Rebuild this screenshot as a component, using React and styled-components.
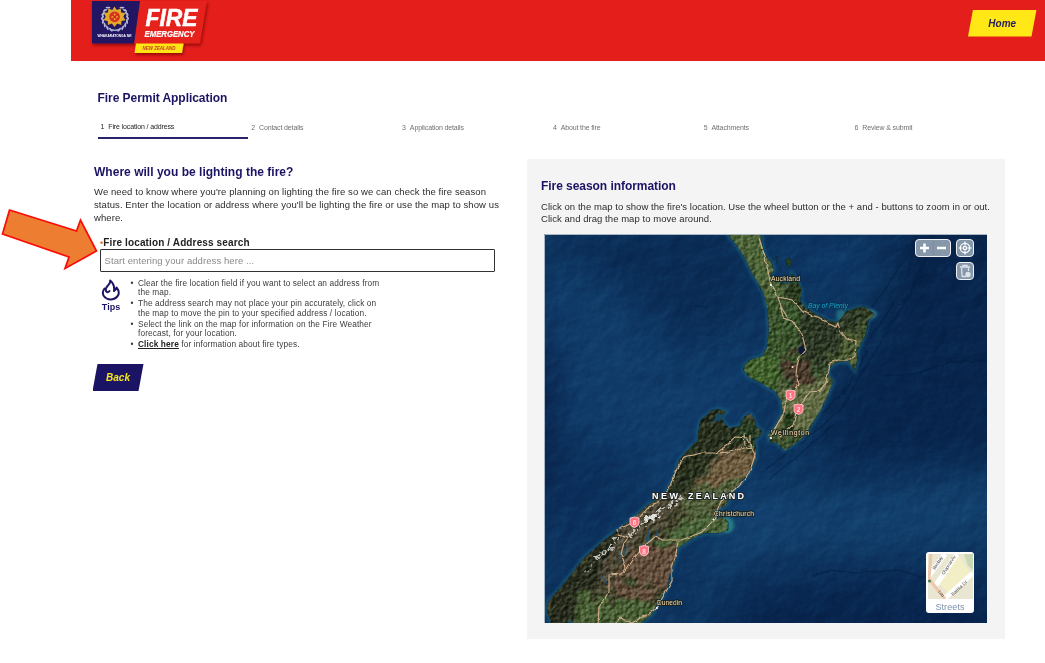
import React from "react";
import styled, { createGlobalStyle, css } from "styled-components";

const Global = createGlobalStyle`
  * { box-sizing: border-box; }
  body { margin: 0; background: #fff; font-family: "Liberation Sans", Arial, sans-serif; color: #333; overflow: hidden; }
  h1, h2, p, ul, ol { margin: 0; padding: 0; }
`;

const navy = "#1b1464";

const Page = styled.div`
  position: relative;
  width: 1045px;
  height: 663px;
  background: #fff;
`;

const Header = styled.header`
  display: flex;
  justify-content: space-between;
  align-items: flex-start;
  height: 61px;
  margin-left: 71px;
  padding: 0 8.5px 0 17px;
  background: #e31e1b;
`;

const SlantButton = styled.button`
  display: flex;
  align-items: center;
  justify-content: center;
  border: 0;
  padding: 0;
  font: italic bold 10px "Liberation Sans", Arial, sans-serif;
  width: ${(p) => p.$width}px;
  height: ${(p) => p.$height}px;
  margin: ${(p) => p.$margin};
  color: ${(p) => p.$color};
  background: ${(p) => p.$bg};
  clip-path: polygon(5px 0, 100% 0, calc(100% - 5px) 100%, 0 100%);
`;

const Intro = styled.section`
  padding: 30px 0 0 97.5px;
`;

const Title = styled.h1`
  font-size: 12px;
  line-height: 14px;
  letter-spacing: -0.05px;
  color: ${navy};
`;

const Steps = styled.ol`
  display: flex;
  list-style: none;
  margin-top: 15px;
`;

const Step = styled.li`
  display: flex;
  gap: 4px;
  width: 150.8px;
  height: 19px;
  padding: ${(p) => (p.$active ? "3px 0 0 3px" : "4px 0 0 3px")};
  font-size: 7px;
  line-height: 8px;
  letter-spacing: -0.13px;
  color: #707070;
  white-space: nowrap;
  ${(p) => p.$active && css`
    color: #222;
    border-bottom: 2px solid #29236c;
  `}
`;

const Columns = styled.main`
  display: flex;
  justify-content: space-between;
  align-items: flex-start;
  padding: 20px 40px 0 94px;
`;

const FormColumn = styled.section`
  width: 410px;
  padding-top: 6px;
`;

const Heading = styled.h2`
  font-size: 12px;
  line-height: 14px;
  letter-spacing: ${(p) => p.$spacing || "-0.05px"};
  color: ${navy};
`;

const Copy = styled.p`
  margin-top: ${(p) => p.$top}px;
  font-size: 9.5px;
  line-height: ${(p) => p.$line}px;
  letter-spacing: ${(p) => p.$spacing}px;
  color: #2c2c2c;
  white-space: nowrap;
`;

const Field = styled.label`
  display: block;
  margin: 12px 0 0 6px;
  font-size: 10px;
  font-weight: bold;
  line-height: 12px;
  letter-spacing: 0.13px;
  color: #222;
`;

const Required = styled.span`
  color: #e8731c;
  font-size: 9px;
`;

const Input = styled.input`
  display: block;
  width: 394.5px;
  height: 23.5px;
  padding: 0 3.5px;
  border: 1px solid #333;
  border-radius: 1px;
  outline: 0;
  font: 9.5px "Liberation Sans", Arial, sans-serif;
  letter-spacing: 0.08px;
  &::placeholder { color: #8a8a8a; opacity: 1; }
`;

const Tips = styled.div`
  display: flex;
  margin: 7px 0 0 7px;
`;

const TipsMark = styled.div`
  width: 20px;
  display: flex;
  flex-direction: column;
  align-items: center;
  font-size: 9px;
  font-weight: bold;
  line-height: 10px;
  color: ${navy};
`;

const TipList = styled.ul`
  list-style: none;
  margin-left: 9.5px;
  font-size: 8.3px;
  line-height: 9.2px;
  letter-spacing: 0.12px;
  color: #3c3c3c;
  white-space: nowrap;
`;

const Tip = styled.li`
  display: flex;
  margin-bottom: 1.9px;
  &::before { content: "•"; width: 7.5px; }
`;

const Link = styled.a`
  color: #222;
  font-weight: bold;
  text-decoration: underline;
`;

const MapPanel = styled.section`
  width: 478px;
  height: 480px;
  padding: 20px 0 0 14px;
  background: #f4f4f4;
`;

const MapFrame = styled.div`
  position: relative;
  width: 443px;
  height: 389px;
  margin: 9px 0 0 3px;
  overflow: hidden;
`;

const MapDrawing = styled.svg`
  display: block;
`;

const Controls = styled.div`
  position: absolute;
  top: 4.5px;
  right: 13px;
  display: grid;
  grid-template-columns: 36.5px 18.5px;
  gap: 5.5px 4.5px;
  justify-items: end;
`;

const Control = styled.button`
  display: flex;
  align-items: center;
  justify-content: space-around;
  width: ${(p) => p.$width || 18.5}px;
  height: 18px;
  padding: 0 1px;
  border: 1.5px solid #eef0f2;
  border-radius: 4px;
  background: #8697aa;
  grid-column: ${(p) => p.$column};
`;

const Basemap = styled.button`
  position: absolute;
  right: 13px;
  bottom: 10px;
  display: flex;
  flex-direction: column;
  align-items: center;
  width: 48px;
  height: 61px;
  padding: 2px 1.5px;
  border: 0;
  border-radius: 3px;
  background: #fff;
  font: 9px/16px "Liberation Sans", Arial, sans-serif;
  letter-spacing: 0.1px;
  color: #7e93a8;
  svg { display: block; flex: none; }
`;

const Pointer = styled.svg`
  position: absolute;
  left: 0;
  top: 204.5px;
`;

const steps = ["Fire location / address", "Contact details", "Application details", "About the fire", "Attachments", "Review & submit"];

const leaves = Array.from({ length: 8 }, (_, i) => 20 + i * 18);

function Logo() {
  return (
    <svg width="130" height="60" viewBox="88 0 130 60">
      <defs>
        <filter id="shade" x="-10%" y="-10%" width="125%" height="135%">
          <feDropShadow dx="1" dy="2" stdDeviation="1.5" floodColor="#700" floodOpacity="0.7" />
        </filter>
      </defs>
      <g filter="url(#shade)">
        <path d="M139 1H207L200 43.5H183.6L182 53H134.5L136 43.5H134z" fill="#e5201d" />
        <path d="M92 1H140L134 43.5H92z" fill="#211762" />
        <path d="M136 43.5H183.6L182 53H134.5z" fill="#ffe414" />
      </g>
      {leaves.map((a) => (
        <g key={a} fill="#b4b9d8">
          <ellipse cx="115" cy="30.5" rx=".9" ry="2.5" transform={`rotate(${a} 115 18) rotate(-60 115 30.5)`} />
          <ellipse cx="115" cy="30.5" rx=".9" ry="2.5" transform={`rotate(${-a} 115 18) rotate(60 115 30.5)`} />
        </g>
      ))}
      <path d="M105 9Q99 19 106 26 110 30.500 119 30.500M125 9Q131 19 124 26 120 30.500 111 30.500" stroke="#b4b9d8" strokeWidth=".9" fill="none" />
      <path d="M114.500 6.500l2.300 3.500 4-1.600.3 4.200 4.200.4-1.900 3.700 2.100 3.500-4.100.8-.2 4.100-4-1.500-2.700 3.300-2.600-3.300-4 1.500-.2-4.100-4.100-.8 2.100-3.500-1.900-3.700 4.200-.4.3-4.200 4 1.600z" fill="#e0a92c" />
      <circle cx="114.6" cy="16.8" r="5.4" fill="#d8331f" />
      <path d="M111.500 16.800h6.300M114.700 13.500v6.600" stroke="#f2c230" strokeWidth="1.2" />
      <circle cx="114.7" cy="16.8" r="1.4" fill="#c62020" />
      <g fontFamily="Liberation Sans, Arial, sans-serif" fontWeight="bold">
        <text x="97.5" y="36.5" fontSize="3.3" fill="#fff" textLength="34" lengthAdjust="spacingAndGlyphs">WHAKARATONGA IWI</text>
        <g fontStyle="italic" fill="#fff">
          <text x="145.5" y="26.3" fontSize="23.5" textLength="52" lengthAdjust="spacingAndGlyphs" stroke="#fff" strokeWidth=".5">FIRE</text>
          <text x="144.5" y="37" fontSize="8.8" textLength="50" lengthAdjust="spacingAndGlyphs" stroke="#fff" strokeWidth=".2">EMERGENCY</text>
          <text x="142.5" y="49.8" fontSize="4.6" fill="#c5392b" textLength="33" lengthAdjust="spacingAndGlyphs">NEW ZEALAND</text>
        </g>
      </g>
    </svg>
  );
}

const north = "M727 233L736 244 744 256 751 271 759 284 764 293 768 311 769 330 767 348 763 356 751 360 745 365 744 370 749 377 758 381 766 386 775 391 781 400 783 412 775 427 768 435 770 441 777 443 785 450 793 445 802 438 808 430 814 420 820 411 824 402 828 394 833 381 827 373 829 368 837 362 848 361 855 370 857 361 857 352 865 334 868 321 875 314 868 309 860 307 847 311 838 322 828 321 815 314 805 307 800 301 801 290 797 281 792 274 790 284 783 283 772 281 770 275 774 270 770 261 765 256 762 245 760 233z";
const south = "M698 441L699 427 701 420 711 412 719 409 726 412 721 416 724 423 729 428 740 426 744 417 751 414 755 421 756 427 762 431 760 436 754 439 756 449 756 458 750 470 744 478 732 491 726 505 716 511 717 519 723 517 728 522 728 530 719 533 704 533 691 539 678 548 675 559 672 568 667 588 657 604 651 615 638 625H576L571 620 564 625H552L547 610 549 601 561 588 574 571 584 558 601 543 617 531 631 520 647 506 664 495 674 478 679 461 687 451z";

const roads = [
  "M759 238L765 257 771 285 778 297 781 307 783 318 792 321 802 334 806 350 799 358 797 366 796 376 799 384 795 390 789 396 785 406 784 413 775 428 771 436",
  "M778 297L792 300 797 305 803 312 817 317 829 324 836 327 838 323 840 331 847 339 856 341 855 356 850 360 838 360 830 363 829 370 826 382 820 391 810 392 802 402 797 410 793 426 780 437",
  "M781 307L788 318",
  "M571 650L560 623M598 625L599 607 605 599 609 592 609 575 621 574 626 567 623 559 621 554 624 543 628 538 619 535 618 529 628 525 638 519 648 508 656 504 665 495 673 480 678 466 684 457 702 453 716 453 726 446 736 437 747 438 755 455 750 471 744 480 735 489 721 501 714 520 701 533 681 540 663 540 655 537 644 546 636 556 628 567 624 573",
  "M716 453L730 452 744 448 754 447M744 434L745 446M750 436V446",
  "M678 541L676 554 672 567 672 581 664 595 656 609 645 616 632 623 620 618 615 624",
];

const cities = [
  ["Auckland", 771, 281, 771, 285, 29],
  ["Wellington", 771, 434.5, 771, 438, 38],
  ["Christchurch", 714, 516, 713.5, 519.5, 40],
  ["Dunedin", 657, 604.5, 657, 608, 25],
];

const seaArea = { filterUnits: "userSpaceOnUse", x: 440, y: 130, width: 660, height: 600 };

function Shield({ x, y, n }) {
  return (
    <g transform={`translate(${x} ${y})`}>
      <path d="M-4.500-4.500L0-5.500 4.500-4.500V1Q4 4 0 5-4 4-4.500 1z" fill="#ff7484" stroke="#ffd9d8" strokeWidth=".8" />
      <text y="2.5" textAnchor="middle" fontSize="6.5" fontWeight="bold" fill="#ffdede">{n}</text>
    </g>
  );
}

function NewZealandMap() {
  return (
    <MapDrawing width="443" height="389" viewBox="544 234 443 389" fontFamily="Liberation Sans, Arial, sans-serif">
      <defs>
        <filter id="b20" {...seaArea} colorInterpolationFilters="sRGB"><feGaussianBlur stdDeviation="17" /></filter>
        <filter id="b2" {...seaArea}><feGaussianBlur stdDeviation="1.6" /></filter>
        <filter id="rough" {...seaArea}><feTurbulence type="fractalNoise" baseFrequency=".13" numOctaves="3" seed="4" /><feDisplacementMap in="SourceGraphic" scale="3.5" xChannelSelector="R" yChannelSelector="G" /></filter>
        <filter id="snow" {...seaArea}><feTurbulence type="fractalNoise" baseFrequency=".25" numOctaves="3" seed="7" /><feDisplacementMap in="SourceGraphic" scale="12" xChannelSelector="R" yChannelSelector="G" /><feGaussianBlur stdDeviation=".6" /></filter>
        <filter id="patchy" {...seaArea}><feTurbulence type="fractalNoise" baseFrequency=".09" numOctaves="5" seed="9" /><feDisplacementMap in="SourceGraphic" scale="26" xChannelSelector="R" yChannelSelector="G" /><feGaussianBlur stdDeviation="1.2" /></filter>
        <filter id="sea" x="0" y="0" width="100%" height="100%" colorInterpolationFilters="sRGB"><feTurbulence type="fractalNoise" baseFrequency=".05" numOctaves="4" seed="12" /><feDiffuseLighting surfaceScale="1.6" lightingColor="#fff"><feDistantLight azimuth="225" elevation="30" /></feDiffuseLighting></filter>
        <filter id="terrain" x="0" y="0" width="100%" height="100%" colorInterpolationFilters="sRGB"><feTurbulence type="fractalNoise" baseFrequency=".24" numOctaves="4" seed="31" /><feDiffuseLighting surfaceScale="1.8" lightingColor="#fff"><feDistantLight azimuth="225" elevation="32" /></feDiffuseLighting></filter>
        <clipPath id="land"><path d={north} /><path d={south} /></clipPath>
      </defs>
      <rect x="544" y="234" width="443" height="389" fill="#0d345f" />
      <g filter="url(#b20)">
        <path d="M550 225L740 225 752 300 700 345 640 305 580 255z" fill="#0a2c55" />
        <path d="M544 260L610 280 690 370 760 330 745 420 660 500 560 420z" fill="#103b69" />
        <path d="M524 320L555 370 548 500 524 500z" fill="#081f48" />
        <path d="M550 470L640 440 620 500 560 560z" fill="#0b2f5b" />
        <path d="M890 205H1020V460H880L820 470 850 410 900 330z" fill="#08254d" />
        <path d="M780 235H880L860 290 810 290z" fill="#0e3765" />
        <path d="M740 488L860 498 1020 480V530L880 545 790 545 690 575z" fill="#13416f" />
        <path d="M740 590L880 575 1020 590V660H720z" fill="#08254e" />
        <path d="M820 430L850 390 880 330 900 300 930 250" stroke="#071c3e" strokeWidth="12" fill="none" />
      </g>
      <rect x="544" y="234" width="443" height="389" filter="url(#sea)" opacity=".34" style={{ mixBlendMode: "soft-light" }} />
      <g fill="none" stroke="#061a3a" strokeWidth="1.5" opacity=".45" filter="url(#rough)">
        <path d="M765 470L790 450 820 428 845 405 858 380 879 345 890 325 907 300 930 250M768 480L806 449 836 422M812 577L830 570 855 573 900 570 925 578M882 376L915 374 950 362 985 360M820 415L850 385M870 340L895 301M694 306L708 307M860 320L885 290 900 265M843 395L868 350" />
      </g>
      <path d="M700 355L718 340 735 332 748 324" fill="none" stroke="#2b6690" strokeWidth="1.5" opacity=".3" filter="url(#b2)" />
      <g fill="none" stroke="#1f6881" strokeWidth="4.5" opacity=".6" filter="url(#b2)"><path d={north} /><path d={south} /></g>
      <ellipse cx="790" cy="288" rx="11" ry="7" fill="#1d5668" filter="url(#b2)" />
      <ellipse cx="871" cy="314" rx="5" ry="4" fill="#2a7c90" filter="url(#b2)" />
      <ellipse cx="841" cy="315" rx="5" ry="6" fill="#226a80" filter="url(#b2)" />
      <ellipse cx="727" cy="525" rx="7" ry="8" fill="#287b82" filter="url(#b2)" />
      <g filter="url(#rough)" stroke="#0a2a3c" strokeWidth=".8"><path d={north} fill="#364d2b" /><path d={south} fill="#3c4026" /><path d="M786 259l3-2 2 6-2 4-3-4zM776 256l3 4-2 3z" fill="#26401f" /></g>
      <g clipPath="url(#land)">
        <path d={north} fill="#374d2b" />
        <path d={south} fill="#3d3f28" />
        <g filter="url(#patchy)">
          <path d="M720 225L760 225 778 270 781 300 764 295 742 255z" fill="#4c6236" />
          <path d="M765 295L800 312 805 350 780 380 755 358 768 340z" fill="#38532c" />
          <path d="M785 270L803 280 805 305 790 300z" fill="#26391f" />
          <path d="M800 303L840 325 850 305 875 308 860 345 828 367 810 365 798 345z" fill="#2b3520" />
          <path d="M840 335L868 320 857 365 830 362z" fill="#45552f" />
          <path d="M738 358L768 354 785 378 769 390 742 380z" fill="#40612c" />
          <path d="M779 358L805 355 815 375 806 390 790 387z" fill="#46392a" />
          <path d="M780 392L830 374 832 394 815 424 794 445 774 435z" fill="#616b42" />
          <path d="M790 408L799 406 787 438 772 440z" fill="#1f3019" />
          <path d="M690 400L732 405 742 445 712 458 688 490 655 502 670 470z" fill="#282f1c" />
          <path d="M738 412L765 425 756 447 735 443z" fill="#263b20" />
          <path d="M718 455L762 446 754 474 720 492 692 495z" fill="#6c5a3d" />
          <path d="M690 492L745 474 730 502 714 514 682 522z" fill="#505b38" />
          <path d="M700 515L732 514 727 537 690 541 672 556 650 542z" fill="#476035" />
          <path d="M664 496L684 496 665 524 630 548 605 590 580 588 604 545z" fill="#4d4636" />
          <path d="M630 516L605 536 560 584 540 603 550 625 583 626 598 575z" fill="#282b1f" />
          <path d="M630 550L678 546 670 592 640 602 610 592z" fill="#5f4c37" />
          <path d="M580 592L605 600 640 600 662 604 640 632 570 630z" fill="#475d33" />
          <path d="M620 580l10 8 8-4-8-8zM780 330l6 10 6-4zM700 470l10-4 3 8zM640 585l12-4 2 8z" fill="#3a4529" />
        </g>
        <rect x="544" y="234" width="443" height="389" filter="url(#terrain)" opacity=".75" style={{ mixBlendMode: "soft-light" }} />
        <g fill="none" stroke="#dedfdb" filter="url(#snow)">
          <path d="M683 496L668 507M664 508L650 517 642 523" strokeWidth="3" strokeDasharray="7 3" opacity=".8" />
          <path d="M658 515L646 519" strokeWidth="5" />
          <path d="M640 528L628 537M617 540L607 552 595 558" strokeWidth="2.6" strokeDasharray="4 3 7 2" opacity=".8" />
          <path d="M603 551L586 573" strokeWidth="1.4" strokeDasharray="3 5" opacity=".6" />
        </g>
      </g>
      <path d="M799 348l4-2 1 3 2 1-4 4-3-1z" fill="#0a1838" stroke="#111f38" />
      <path d="M647 541l1-10 1 2v8zM656 536l2-7M640 550l1-5M619 562l2-11M601 575l6 9M623 556l4-10" stroke="#20506b" strokeWidth="1.3" fill="#2d6989" />
      <path d="M711 423l7-10 6 3 2 6-6-3z" fill="#164764" filter="url(#rough)" />
      <g filter="url(#rough)" fill="none" stroke="#cfae8b" strokeWidth="1.1">
        {roads.map((d) => <path key={d} d={d} />)}
      </g>
      <circle cx="792.5" cy="367" r="1" fill="#ffe7c4" />
      <Shield x={790.5} y={395.5} n="1" />
      <Shield x={798.5} y={409.5} n="2" />
      <Shield x={634.5} y={522.5} n="6" />
      <Shield x={644} y={551} n="8" />
      <g stroke="#171e18" strokeWidth="1.5" paintOrder="stroke" fontSize="6.8" fill="#ffe2b3">
        {cities.map(([name, x, y, cx, cy, length]) => (
          <g key={name}>
            <text x={x} y={y} textLength={length}>{name}</text>
            <circle cx={cx} cy={cy} r="1.1" fill="#fff" strokeWidth=".3" />
          </g>
        ))}
      </g>
      <text x="808" y="307.5" fontSize="6.8" fontStyle="italic" fill="#16a5d0" stroke="#06364e" strokeWidth="1" paintOrder="stroke" textLength="40">Bay of Plenty</text>
      <g fontSize="9" fontWeight="bold" fill="#fff" stroke="#222b2a" strokeWidth="2" paintOrder="stroke">
        <text x="652" y="498.5" textLength="26">NEW</text>
        <text x="688" y="498.5" textLength="56">ZEALAND</text>
      </g>
      <path d="M544.500 623V234.500H987" fill="none" stroke="#a8b7c4" />
    </MapDrawing>
  );
}

export default function App() {
  return (
    <Page>
      <Global />
      <Header>
        <Logo />
        <SlantButton $width={68.5} $height={27} $margin="9.5px 0 0" $bg="#ffe816" $color="#29205a">Home</SlantButton>
      </Header>
      <Intro>
        <Title>Fire Permit Application</Title>
        <Steps>
          {steps.map((name, i) => (
            <Step key={name} $active={i === 0}><span>{i + 1}</span><span>{name}</span></Step>
          ))}
        </Steps>
      </Intro>
      <Columns>
        <FormColumn>
          <Heading $spacing="0.02px">Where will you be lighting the fire?</Heading>
          <Copy $top={6} $line={13.2} $spacing={0.09}>
            We need to know where you're planning on lighting the fire so we can check the fire season<br />
            status. Enter the location or address where you'll be lighting the fire or use the map to show us<br />
            where.
          </Copy>
          <Field>
            <Required>•</Required>Fire location / Address search
            <Input placeholder="Start entering your address here ..." />
          </Field>
          <Tips>
            <TipsMark>
              <svg width="20" height="23" viewBox="0 0 20 23" fill="none" stroke={navy} strokeWidth="2" strokeLinejoin="round" strokeLinecap="round">
                <path d="M3.500 9.500Q.8 13 2.500 16.500 5 20.500 10 20.500 15.500 20 17.500 15.500 18.500 12 15.500 8.500 15 11 13 12 14 5.500 9.200 1.500 9.500 4.500 6.500 7 3.800 10 5.300 12.500 7 14 8.500 12" />
              </svg>
              Tips
            </TipsMark>
            <TipList>
              <Tip><span>Clear the fire location field if you want to select an address from<br />the map.</span></Tip>
              <Tip><span>The address search may not place your pin accurately, click on<br />the map to move the pin to your specified address / location.</span></Tip>
              <Tip><span>Select the link on the map for information on the Fire Weather<br />forecast, for your location.</span></Tip>
              <Tip><span><Link>Click here</Link> for information about fire types.</span></Tip>
            </TipList>
          </Tips>
          <SlantButton $width={51} $height={27} $margin="13px 0 0 -1.5px" $bg={navy} $color="#f7e81c">Back</SlantButton>
        </FormColumn>
        <MapPanel>
          <Heading>Fire season information</Heading>
          <Copy $top={8} $line={12} $spacing={0.05}>
            Click on the map to show the fire's location. Use the wheel button or the + and - buttons to zoom in or out.<br />
            Click and drag the map to move around.
          </Copy>
          <MapFrame>
            <NewZealandMap />
            <Controls>
              <Control $width={36.5}>
                <svg width="32" height="14" viewBox="0 0 32 14" stroke="#fff" strokeWidth="2.5"><path d="M3 7h9M7.500 2.500v9M20 7h9" /><path d="M16 0v14" stroke="#7688a0" strokeWidth=".7" /></svg>
              </Control>
              <Control>
                <svg width="14" height="14" viewBox="0 0 14 14" fill="none" stroke="#fff" strokeWidth="1.2"><circle cx="7" cy="7" r="4.7" /><circle cx="7" cy="7" r="1.7" /><path d="M7 .5v4M7 9.500v4M.5 7h4M9.500 7h4" /></svg>
              </Control>
              <Control $column={2}>
                <svg width="14" height="14" viewBox="0 0 14 14" fill="none" stroke="#dce3ea" strokeWidth="1.3"><path d="M2 3h10M5 3V1.300h4V3M3.500 4l.7 8.500h4M10.500 4v3" /><circle cx="10" cy="10.500" r="2" fill="#dce3ea" /></svg>
              </Control>
            </Controls>
            <Basemap>
              <svg width="45" height="45" viewBox="0 0 45 45">
                <path d="M0 0H45V45H0z" fill="#e9e7d1" />
                <path d="M29 0L43 19 22 40 10 29z" fill="#f2efc6" />
                <path d="M36 0h9v16l-5-4z" fill="#c8d9b1" />
                <path d="M0 23L17 0M8 31L29 0M17 44L45 19" stroke="#fff" strokeWidth="5" />
                <path d="M3 0L1 25 17 45" stroke="#eec6ab" strokeWidth="3" fill="none" />
                <circle cx="1.5" cy="27" r="1.5" fill="#4b7950" />
                <g fontSize="4.600" fill="#555" fontFamily="Liberation Sans, Arial, sans-serif">
                  <text transform="translate(7 16) rotate(-57)" textLength="15">Bambury</text>
                  <text transform="translate(16 21) rotate(-57)" textLength="22">Chapman Av</text>
                  <text transform="translate(25 42) rotate(-43)">Battita Dr</text>
                  <text transform="translate(10 38) rotate(50)" textLength="7">Lou</text>
                </g>
              </svg>
              Streets
            </Basemap>
          </MapFrame>
        </MapPanel>
      </Columns>
      <Pointer width="100" height="70" viewBox="0 0 100 70">
        <path d="M9.500 5L76.500 26 80.500 15 96.500 46 65 63.500 69 52 2.500 29z" fill="#ed7d31" stroke="#fb0a08" strokeWidth="1.7" />
      </Pointer>
    </Page>
  );
}
